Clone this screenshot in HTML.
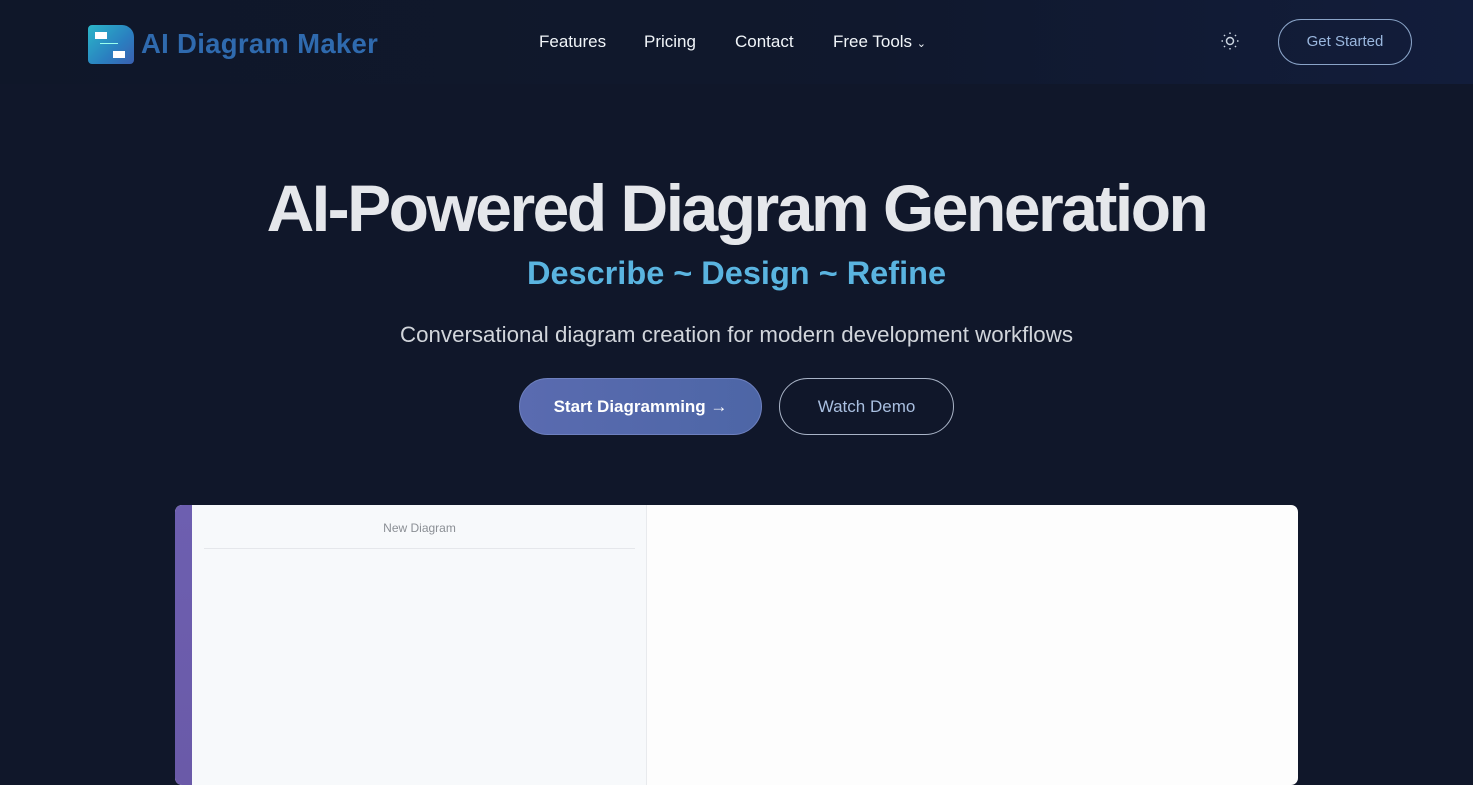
<!DOCTYPE html>
<html><head><meta charset="utf-8"><style>
*{margin:0;padding:0;box-sizing:border-box}
body{width:1473px;height:768px;overflow:hidden;background:#10172a;font-family:"Liberation Sans",sans-serif;position:relative}
.hdr{position:absolute;left:0;top:0;width:1473px;height:84px;background:linear-gradient(90deg,#0f1729 0%,#10182d 60%,#121d3b 100%)}
.logo{position:absolute;left:88px;top:25px;width:46px;height:39px;border-radius:4px 12px 4px 4px;background:linear-gradient(135deg,#2bb6c8,#2a7fc0 60%,#3a5fb0)}
.lt{position:absolute;left:141px;top:28px;font-size:27.5px;font-weight:bold;color:#2f6aae;letter-spacing:0.3px}
.nav{position:absolute;top:32px;font-size:17px;color:#f1f5f9}
.gs{position:absolute;left:1278px;top:19px;width:134px;height:46px;border:1.5px solid #8aa4c8;border-radius:23px;color:#9ab7de;font-size:15px;text-align:center;line-height:43px}
h1{position:absolute;left:0;width:1473px;top:170px;text-align:center;font-size:66px;color:#e5e7eb;letter-spacing:-2.5px;font-weight:bold}
.sub{position:absolute;left:0;width:1473px;top:255px;text-align:center;font-size:32.5px;color:#5ab4e0;font-weight:600}
.desc{position:absolute;left:0;width:1473px;top:322px;text-align:center;font-size:22.3px;color:#d1d5db}
.b1{position:absolute;left:519px;top:378px;width:243px;height:57px;border-radius:29px;background:linear-gradient(90deg,#5a6bb0,#4d66a6);border:1px solid #6e80bf;color:#fff;font-size:17px;text-align:center;line-height:55px;font-weight:bold}
.b2{position:absolute;left:779px;top:378px;width:175px;height:57px;border-radius:29px;border:1px solid #a9b4c7;color:#a9bfe0;font-size:17px;text-align:center;line-height:55px}
.panel{position:absolute;left:175px;top:505px;width:1123px;height:280px;border-radius:7px;background:#fdfdfd;overflow:hidden}
.bar{position:absolute;left:0;top:0;width:17px;height:100%;background:linear-gradient(180deg,#6d5fb0,#6a5aa8)}
.side{position:absolute;left:17px;top:0;width:455px;height:100%;background:#f7f9fb;border-right:1px solid #e8eaed}
.nd{position:absolute;left:0;width:455px;top:16px;text-align:center;font-size:12px;color:#8b8f95}
.ln{position:absolute;left:12px;top:43px;width:431px;height:1px;background:#e5e7eb}
</style></head><body>
<div class="hdr"></div>
<div class="logo"><div style="position:absolute;left:7px;top:7px;width:12px;height:7px;background:#fff"></div><div style="position:absolute;left:25px;top:26px;width:12px;height:7px;background:#fff"></div><div style="position:absolute;left:12px;top:18px;width:18px;height:1px;background:#9fe"></div></div>
<div class="lt">AI Diagram Maker</div>
<div class="nav" style="left:539px">Features</div>
<div class="nav" style="left:644px">Pricing</div>
<div class="nav" style="left:735px">Contact</div>
<div class="nav" style="left:833px">Free Tools <span style="font-size:11px">&#8964;</span></div>
<svg style="position:absolute;left:1220px;top:31px" width="20" height="20" viewBox="0 0 20 20" fill="none" stroke="#cbd5e1" stroke-width="1.5"><circle cx="10" cy="10" r="3.5"/><path d="M10 1.5v1.5M10 17v1.5M1.5 10h1.5M17 10h1.5M4 4l1 1M15 15l1 1M4 16l1-1M15 5l1-1"/></svg>
<div class="gs">Get Started</div>
<h1>AI-Powered Diagram Generation</h1>
<div class="sub">Describe ~ Design ~ Refine</div>
<div class="desc">Conversational diagram creation for modern development workflows</div>
<div class="b1">Start Diagramming &rarr;</div>
<div class="b2">Watch Demo</div>
<div class="panel"><div class="bar"></div><div class="side"><div class="nd">New Diagram</div><div class="ln"></div></div></div>
</body></html>
